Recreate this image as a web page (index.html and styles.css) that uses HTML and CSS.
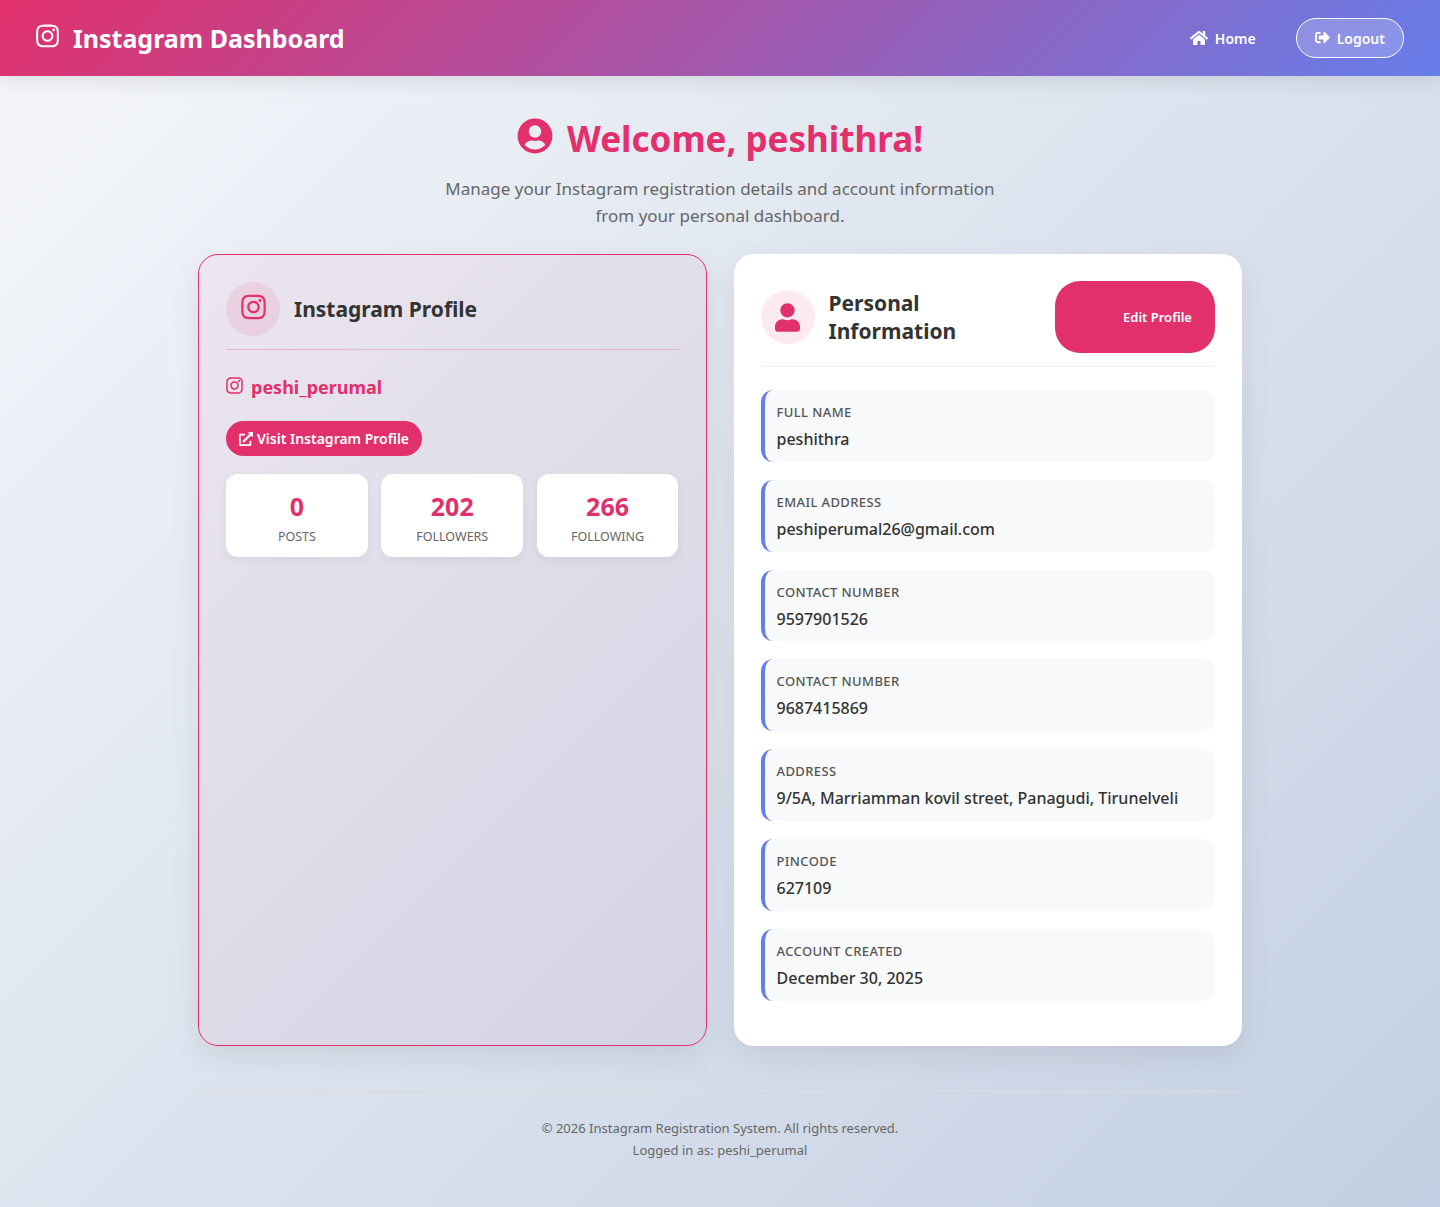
FILE: index.html
```html
<!DOCTYPE html>
<html lang="en">
<head>
    <meta charset="UTF-8">
    <meta name="viewport" content="width=device-width, initial-scale=1.0">
    <title>Instagram Dashboard</title>
    <link rel="stylesheet" href="styles.css">
</head>
<body>
    <svg class="iconos" xmlns="http://www.w3.org/2000/svg">
        <symbol id="i-instagram" viewBox="0 0 448 512"><path d="M224.1 141c-63.6 0-114.9 51.3-114.9 114.9s51.3 114.9 114.9 114.9S339 319.5 339 255.9 287.7 141 224.1 141zm0 189.6c-41.1 0-74.7-33.5-74.7-74.7s33.5-74.7 74.7-74.7 74.7 33.5 74.7 74.7-33.6 74.7-74.7 74.7zm146.4-194.3c0 14.9-12 26.8-26.8 26.8-14.9 0-26.8-12-26.8-26.8s12-26.8 26.8-26.8 26.8 12 26.8 26.8zm76.1 27.2c-1.7-35.9-9.9-67.7-36.2-93.9-26.2-26.2-58-34.4-93.9-36.2-37-2.1-147.9-2.1-184.9 0-35.8 1.7-67.6 9.9-93.9 36.1s-34.4 58-36.2 93.9c-2.1 37-2.1 147.9 0 184.9 1.7 35.9 9.9 67.7 36.2 93.9s58 34.4 93.9 36.2c37 2.1 147.9 2.1 184.9 0 35.9-1.7 67.7-9.9 93.9-36.2 26.2-26.2 34.4-58 36.2-93.9 2.1-37 2.1-147.8 0-184.8zM398.8 388c-7.8 19.6-22.9 34.7-42.6 42.6-29.5 11.7-99.5 9-132.1 9s-102.7 2.6-132.1-9c-19.6-7.8-34.7-22.9-42.6-42.6-11.7-29.5-9-99.5-9-132.1s-2.6-102.7 9-132.1c7.8-19.6 22.9-34.7 42.6-42.6 29.5-11.7 99.5-9 132.1-9s102.7-2.6 132.1 9c19.6 7.8 34.7 22.9 42.6 42.6 11.7 29.5 9 99.5 9 132.1s2.7 102.7-9 132.1z"/></symbol>
        <symbol id="i-circulo" viewBox="0 0 496 512"><path d="M248 8C111 8 0 119 0 256s111 248 248 248 248-111 248-248S385 8 248 8zm0 96c48.6 0 88 39.4 88 88s-39.4 88-88 88-88-39.4-88-88 39.4-88 88-88zm0 344c-58.7 0-111.3-26.6-146.5-68.2 18.8-35.4 55.6-59.8 98.5-59.8 2.4 0 4.8.4 7.1 1.1 13 4.2 26.6 6.9 40.9 6.9 14.3 0 28-2.7 40.9-6.9 2.3-.7 4.7-1.1 7.1-1.1 42.9 0 79.7 24.4 98.5 59.8C359.3 421.4 306.7 448 248 448z"/></symbol>
        <symbol id="i-user" viewBox="0 0 448 512"><path d="M224 256c70.7 0 128-57.3 128-128S294.7 0 224 0 96 57.3 96 128s57.3 128 128 128zm89.6 32h-16.7c-22.2 10.2-46.9 16-72.9 16s-50.6-5.8-72.9-16h-16.7C60.2 288 0 348.2 0 422.4V464c0 26.5 21.5 48 48 48h352c26.5 0 48-21.5 48-48v-41.6c0-74.2-60.2-134.4-134.4-134.4z"/></symbol>
        <symbol id="i-home" viewBox="0 0 576 512"><path d="M280.37 148.26L96 300.11V464a16 16 0 0 0 16 16l112.06-.29a16 16 0 0 0 15.92-16V368a16 16 0 0 1 16-16h64a16 16 0 0 1 16 16v95.64a16 16 0 0 0 16 16.05L464 480a16 16 0 0 0 16-16V300L295.67 148.26a12.19 12.19 0 0 0-15.3 0zM571.6 251.47L488 182.56V44.05a12 12 0 0 0-12-12h-56a12 12 0 0 0-12 12v72.61L318.47 43a48 48 0 0 0-61 0L4.34 251.47a12 12 0 0 0-1.6 16.9l25.5 31A12 12 0 0 0 45.15 301l235.22-193.74a12.19 12.19 0 0 1 15.3 0L530.9 301a12 12 0 0 0 16.9-1.6l25.5-31a12 12 0 0 0-1.7-16.93z"/></symbol>
        <symbol id="i-salir" viewBox="0 0 512 512"><path d="M497 273L329 441c-15 15-41 4.5-41-17v-96H152c-13.3 0-24-10.7-24-24v-96c0-13.3 10.7-24 24-24h136V88c0-21.4 25.9-32 41-17l168 168c9.3 9.4 9.3 24.6 0 34zM192 436v-40c0-6.6-5.4-12-12-12H96c-17.7 0-32-14.3-32-32V160c0-17.7 14.3-32 32-32h84c6.6 0 12-5.4 12-12V76c0-6.6-5.4-12-12-12H96c-53 0-96 43-96 96v192c0 53 43 96 96 96h84c6.6 0 12-5.4 12-12z"/></symbol>
        <symbol id="i-enlace" viewBox="0 0 512 512"><path d="M432,320H400a16,16,0,0,0-16,16V448H64V128H208a16,16,0,0,0,16-16V80a16,16,0,0,0-16-16H48A48,48,0,0,0,0,112V464a48,48,0,0,0,48,48H400a48,48,0,0,0,48-48V336A16,16,0,0,0,432,320ZM488,0h-128c-21.37,0-32.05,25.91-17,41l35.73,35.73L135,320.37a24,24,0,0,0,0,34L157.67,377a24,24,0,0,0,34,0L435.28,133.32,471,169c15,15,41,4.5,41-17V24A24,24,0,0,0,488,0Z"/></symbol>
    </svg>

    <header class="navbar">
        <a class="marca" href="#">
            <svg class="icono-marca"><use href="#i-instagram"/></svg>
            <span>Instagram Dashboard</span>
        </a>
        <nav class="enlaces">
            <a class="enlace" href="#"><svg class="icono-home"><use href="#i-home"/></svg>Home</a>
            <a class="enlace salir" href="#"><svg class="icono-salir"><use href="#i-salir"/></svg>Logout</a>
        </nav>
    </header>

    <main class="contenedor">
        <section class="bienvenida">
            <h1><svg class="icono-circulo"><use href="#i-circulo"/></svg>Welcome, peshithra!</h1>
            <p>Manage your Instagram registration details and account information from your personal dashboard.</p>
        </section>

        <div class="columnas">
            <section class="tarjeta tarjeta-insta">
                <div class="cabecera">
                    <div class="circulo circulo-insta"><svg class="icono-insta"><use href="#i-instagram"/></svg></div>
                    <h2>Instagram Profile</h2>
                </div>
                <div class="usuario"><svg class="icono-usuario"><use href="#i-instagram"/></svg>peshi_perumal</div>
                <a class="visitar" href="#"><svg class="icono-enlace"><use href="#i-enlace"/></svg>Visit Instagram Profile</a>
                <div class="stats">
                    <div class="stat"><div class="numero">0</div><div class="etiqueta">POSTS</div></div>
                    <div class="stat"><div class="numero">202</div><div class="etiqueta">FOLLOWERS</div></div>
                    <div class="stat"><div class="numero">266</div><div class="etiqueta">FOLLOWING</div></div>
                </div>
            </section>

            <section class="tarjeta">
                <div class="cabecera cabecera-datos">
                    <div class="circulo"><svg class="icono-persona"><use href="#i-user"/></svg></div>
                    <h2>Personal Information</h2>
                    <a class="editar" href="#">Edit Profile</a>
                </div>
                <div class="dato"><div class="dato-nombre">FULL NAME</div><div class="dato-valor">peshithra</div></div>
                <div class="dato"><div class="dato-nombre">EMAIL ADDRESS</div><div class="dato-valor">peshiperumal26@gmail.com</div></div>
                <div class="dato"><div class="dato-nombre">CONTACT NUMBER</div><div class="dato-valor">9597901526</div></div>
                <div class="dato"><div class="dato-nombre">CONTACT NUMBER</div><div class="dato-valor">9687415869</div></div>
                <div class="dato"><div class="dato-nombre">ADDRESS</div><div class="dato-valor">9/5A, Marriamman kovil street, Panagudi, Tirunelveli</div></div>
                <div class="dato"><div class="dato-nombre">PINCODE</div><div class="dato-valor">627109</div></div>
                <div class="dato"><div class="dato-nombre">ACCOUNT CREATED</div><div class="dato-valor">December 30, 2025</div></div>
            </section>
        </div>

        <footer class="pie">
            <p>© 2026 Instagram Registration System. All rights reserved.</p>
            <p>Logged in as: peshi_perumal</p>
        </footer>
    </main>
</body>
</html>
```

FILE: styles.css
```css
*{
    box-sizing: border-box;
    margin: 0;
    padding: 0;
}
body{
    font-family: "Noto Sans", "Open Sans", sans-serif;
    background: linear-gradient(135deg, #f5f7fa 0%, #c3cfe2 100%);
    min-height: 1207px;
    color: #333;
}
a{
    text-decoration: none;
    color: inherit;
}
svg{
    fill: currentColor;
    flex-shrink: 0;
}
.iconos{
    display: none;
}

/* barra superior */
.navbar{
    height: 76px;
    padding: 0 36px;
    display: flex;
    align-items: center;
    justify-content: space-between;
    color: #fff;
    background: linear-gradient(135deg, #e1306c, #667eea);
    box-shadow: 0 4px 20px rgba(0, 0, 0, 0.1);
}
.marca{
    display: flex;
    align-items: center;
    gap: 14px;
    font-size: 25px;
    font-weight: 700;
}
.icono-marca{
    width: 23px;
    height: 26px;
    margin-top: -5px;
}
.enlaces{
    display: flex;
    align-items: center;
    gap: 22px;
}
.enlace{
    display: flex;
    align-items: center;
    gap: 7px;
    height: 40px;
    padding: 0 18px;
    font-size: 14px;
    font-weight: 600;
}
.salir{
    border: 1px solid #fff;
    border-radius: 25px;
    background: rgba(255, 255, 255, 0.2);
}
.icono-home{
    width: 18px;
    height: 16px;
}
.icono-salir{
    width: 15px;
    height: 15px;
    margin-top: -2px;
}

/* contenido */
.contenedor{
    width: 1044px;
    margin: 0 auto;
}
.bienvenida{
    padding-top: 36px;
    text-align: center;
}
.bienvenida h1{
    display: flex;
    align-items: center;
    justify-content: center;
    gap: 14px;
    height: 52px;
    font-size: 35px;
    font-weight: 700;
    color: #e1306c;
}
.icono-circulo{
    width: 36px;
    height: 36px;
    margin-top: -5px;
}
.bienvenida p{
    width: 560px;
    margin: 11px auto 0;
    font-size: 17px;
    line-height: 27px;
    color: #666;
}
.columnas{
    display: grid;
    grid-template-columns: 1fr 1fr;
    gap: 27px;
    margin-top: 25px;
}
.tarjeta{
    padding: 27px;
    border-radius: 20px;
    background: #fff;
    box-shadow: 0 10px 30px rgba(0, 0, 0, 0.08);
}
.tarjeta-insta{
    border: 1px solid #e1306c;
    background: rgba(225, 48, 108, 0.05);
}
.cabecera{
    display: flex;
    align-items: center;
    gap: 14px;
    padding-bottom: 13px;
    border-bottom: 1px solid #eee;
    margin-bottom: 23px;
}
.tarjeta-insta .cabecera{
    border-bottom-color: rgba(225, 48, 108, 0.25);
}
.circulo{
    width: 54px;
    height: 54px;
    border-radius: 50%;
    display: flex;
    align-items: center;
    justify-content: center;
    flex-shrink: 0;
    color: #e1306c;
    background: rgba(225, 48, 108, 0.1);
}
.icono-insta{
    width: 25px;
    height: 28px;
    margin-top: -4px;
}
.icono-persona{
    width: 25px;
    height: 29px;
}
.cabecera h2{
    font-size: 21px;
    font-weight: 700;
    line-height: 28px;
    color: #333;
}
.cabecera-datos h2{
    flex: 1;
}
.editar{
    width: 160px;
    height: 72px;
    padding: 0 22px 0 68px;
    display: flex;
    align-items: center;
    text-align: center;
    flex-shrink: 0;
    font-size: 13px;
    font-weight: 600;
    line-height: 17px;
    color: #fff;
    border-radius: 25px;
    background: #e1306c;
}

/* perfil */
.usuario{
    display: flex;
    align-items: center;
    gap: 8px;
    height: 28px;
    font-size: 18px;
    font-weight: 700;
    color: #e1306c;
}
.icono-usuario{
    width: 17px;
    height: 19px;
    margin-top: -3px;
}
.visitar{
    display: inline-flex;
    align-items: center;
    gap: 4px;
    height: 35px;
    margin-top: 20px;
    padding: 0 13px;
    font-size: 14px;
    font-weight: 600;
    color: #fff;
    border-radius: 25px;
    background: #e1306c;
}
.icono-enlace{
    width: 14px;
    height: 14px;
}
.stats{
    display: grid;
    grid-template-columns: repeat(3, 1fr);
    gap: 13.5px;
    margin-top: 18px;
}
.stat{
    height: 83px;
    padding-top: 14px;
    text-align: center;
    border-radius: 12px;
    background: #fff;
    box-shadow: 0 4px 10px rgba(0, 0, 0, 0.05);
}
.numero{
    font-size: 25px;
    font-weight: 700;
    line-height: 36px;
    color: #e1306c;
}
.etiqueta{
    margin-top: 4px;
    font-size: 12.5px;
    line-height: 18px;
    color: #666;
}

/* datos personales */
.dato{
    height: 71.8px;
    margin-bottom: 18px;
    padding: 13px 12px 0;
    border-left: 4px solid #667eea;
    border-radius: 12px;
    background: #f8f9fa;
}
.dato:last-child{
    margin-bottom: 18px;
}
.dato-nombre{
    font-size: 13px;
    font-weight: 500;
    line-height: 18px;
    letter-spacing: 0.4px;
    color: #555;
}
.dato-valor{
    margin-top: 7px;
    font-size: 16px;
    font-weight: 500;
    line-height: 22px;
    color: #333;
}

.pie{
    margin-top: 45px;
    padding-top: 25px;
    border-top: 1px solid #ddd;
    text-align: center;
    font-size: 13px;
    line-height: 22px;
    color: #666;
}
```
